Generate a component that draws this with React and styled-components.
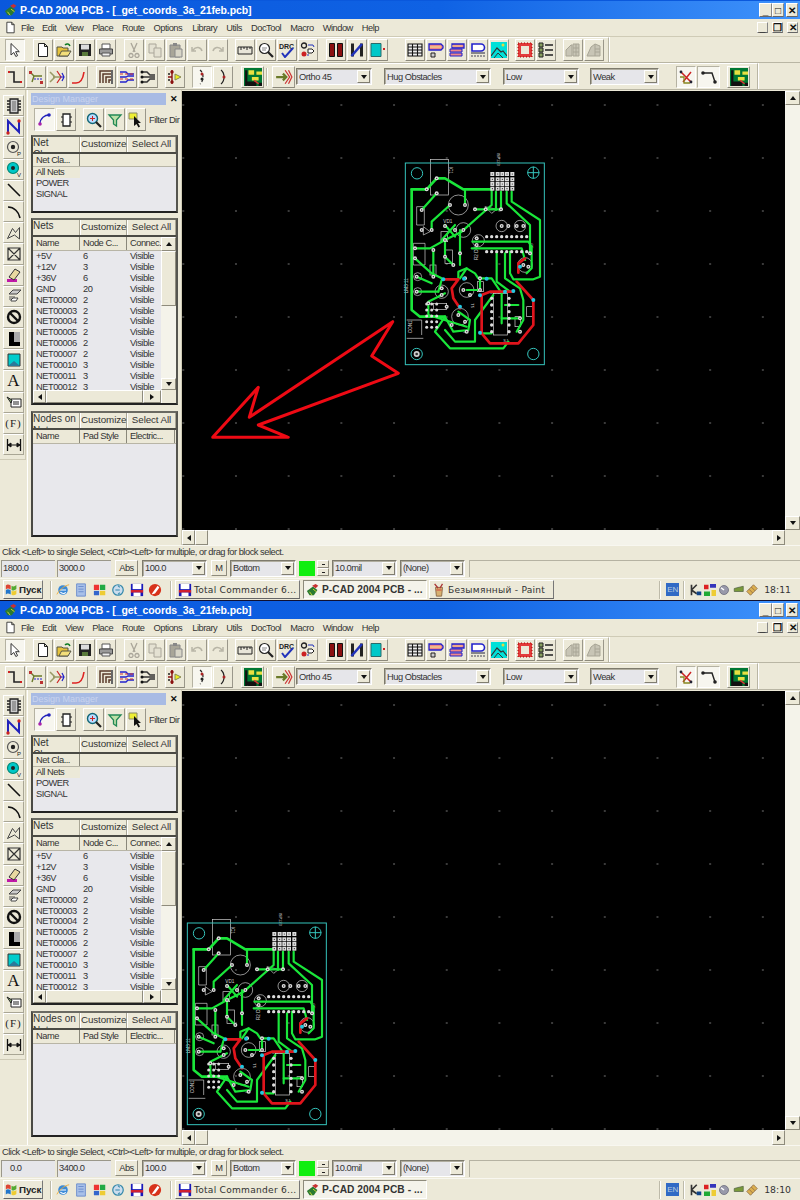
import React from 'react';
import styled, { createGlobalStyle, css } from 'styled-components';

const Global = createGlobalStyle`
  html, body { margin: 0; padding: 0; background: #ece9d8; }
  body { width: 800px; font-family: "Liberation Sans", Arial, sans-serif; font-size: 9.3px; color: #222; }
`;
const uiText = css` font: 400 9.3px "Liberation Sans", Arial, sans-serif; letter-spacing: -.48px; color: #333; `;

/* ---------- icons ---------- */
const Svg = styled.svg` display: block; flex: none; `;
const S = ({ children, size = 16 }) => <Svg width={size} height={size} viewBox="0 0 16 16">{children}</Svg>;
const I = {
  select: <path d="M4 1.5V13l2.8-2.5 2 4 1.8-.9-2-3.9h3.7z" fill="#fff" stroke="#333" />,
  doc: <path d="M3.5 1.5h6l3 3v10h-9zM9.5 1.5v3h3" fill="#fff" stroke="#222" />,
  open: <><path d="M1 5h5l1 1h5v8H1z" fill="#e6c33c" stroke="#554" /><path d="M3 14l2.5-5H15l-3 5z" fill="#f3df7a" stroke="#554" /><path d="M9 3c2-2 4-1 5 1" fill="none" stroke="#0a7a20" strokeWidth="1.5" /></>,
  save: <><path d="M2 2h12v12H2z" fill="#222" /><path d="M4 2.500h8v5H4z" fill="#ddd" /><path d="M5 10h6v4H5z" fill="#5a7a3a" /></>,
  print: <><path d="M4 2h8v5H4z" fill="#fff" stroke="#555" /><path d="M1.500 7h13v5h-13z" fill="#999" stroke="#444" /><path d="M4 11h8v3H4z" fill="#eee" stroke="#555" /></>,
  cut: <path d="M5 1l4 9M11 1L7 10M5 11.500a2 2 0 1 0 .01 0M11 11.500a2 2 0 1 0 .01 0" fill="none" stroke="#aaa69a" strokeWidth="1.3" />,
  copy: <><path d="M2 2h7v9H2z" fill="#e4e1d2" stroke="#aaa69a" /><path d="M7 6h7v9H7z" fill="#e4e1d2" stroke="#aaa69a" /></>,
  paste: <><path d="M2 3h10v12H2z" fill="#a8a598" stroke="#888" /><path d="M7 7h7v8H7z" fill="#d8d5c7" stroke="#888" /><path d="M5 1h4v3H5z" fill="#888" /></>,
  undo: <path d="M4 8c3-4 8-3 9 1M3 5v4h4" fill="none" stroke="#b8b5a6" strokeWidth="1.5" />,
  redo: <path d="M12 8C9 4 4 5 3 9M13 5v4H9" fill="none" stroke="#b8b5a6" strokeWidth="1.5" />,
  ruler: <><path d="M1 5h14v7H1z" fill="#e8e5d8" stroke="#222" /><path d="M4 5v3M7 5v2M10 5v3M13 5v2" stroke="#222" /></>,
  zoomdoc: <><circle cx="6.500" cy="6.500" r="5" fill="#fff" stroke="#222" strokeWidth="1.2" /><path d="M10 10l5 5" stroke="#222" strokeWidth="2.2" /><path d="M4 6h5M4 8h4" stroke="#888" /></>,
  drc: <><text x="0" y="7" fontSize="7" fontWeight="700" fontFamily="Liberation Sans" fill="#222">DRC</text><path d="M3 11l3 4 8-9" fill="none" stroke="#2233bb" strokeWidth="2" /></>,
  conn: <><circle cx="4" cy="3.500" r="2.500" fill="none" stroke="#222" strokeWidth="1.3" /><circle cx="4" cy="12" r="2.500" fill="#c22" /><path d="M8 3h5l1 2M7 13h2" stroke="#2233bb" fill="none" /><path d="M8 7h4l2 2-2 2H8z" fill="#fff" stroke="#222" /></>,
  pads: <><path d="M1.500 1.500h5v13h-5z" fill="#8a1010" stroke="#111" /><path d="M9.500 1.500h5v13h-5z" fill="#8a1010" stroke="#111" /></>,
  net: <><path d="M2 1.500h3v13H2zM11 1.500h3v13h-3z" fill="#222" /><path d="M2.500 14L13 2" stroke="#2233bb" strokeWidth="2.6" /></>,
  door: <><path d="M1 1.500h10v13H1z" fill="#00c8c8" stroke="#2a6a6a" /><path d="M13 6h2v2h-2z" fill="#c22" /></>,
  grid: <path d="M1 2h14v12H1zM1 5h14M1 8h14M1 11h14M5.500 2v12M10.500 2v12" fill="#eee" stroke="#111" strokeWidth="1.1" />,
  layerP: <><path d="M1 2h12l2 2v2l-2 2H1z" fill="#e88" stroke="#22c" strokeWidth="1.3" /><path d="M3 11h4v4H3z" fill="#ccc" stroke="#222" /><path d="M2 5h11" stroke="#ec8" strokeWidth="1.5" /></>,
  layerS: <><path d="M3 2h12v4H3z" fill="#e88" stroke="#22c" strokeWidth="1.3" /><path d="M1 7h12v3H1zM1 11h12v3H1z" fill="#e88" stroke="#22c" /><path d="M3 4h10" stroke="#ec8" /></>,
  layerD: <><path d="M2 2h9a3 3 0 0 1 0 7H2z" fill="#fff" stroke="#22c" strokeWidth="1.6" /><path d="M1 11h14" stroke="#445" strokeWidth="1.2" /><path d="M1 14h14" stroke="#445" strokeWidth="1.2" strokeDasharray="2 1" /></>,
  mountain: <><path d="M0 0h16v16H0z" fill="#00e0d8" /><path d="M0 14l6-8 4 4 2-1 4 5" fill="none" stroke="#333" strokeWidth="1.2" /><path d="M3 16l4-5 3 3 2 2" fill="none" stroke="#333" /><circle cx="12" cy="3" r="1.500" fill="#dd4" /></>,
  redbox: <><path d="M1 1h14v14H1z" fill="#e23a3a" /><path d="M4 4h8v8H4z" fill="#ece9d8" /><path d="M1 1h14v14H1z" fill="none" stroke="#a00" strokeDasharray="1 2" /></>,
  list: <><path d="M1 1h4v4H1zM1 6h4v4H1zM1 11h4v4H1z" fill="#8aa060" stroke="#222" /><path d="M7 3h8M7 8h8M7 13h8" stroke="#222" strokeWidth="1.3" /></>,
  dim1: <path d="M1 14V8l5-5h1v11zM8 2h6v12H8zM8 6h6M8 10h6M11 2v12" fill="#c8c5b6" stroke="#a8a596" />,
  dim2: <path d="M1 14l4-9 4-3 5 2v10H1zM9 2v12M9 7h5M9 10h5" fill="#c8c5b6" stroke="#a8a596" />,
  rManualEnds: <><path d="M2 3h5v10h7" fill="none" stroke="#222" strokeWidth="1.6" /><path d="M1 2h2v2H1zM13 12h2v2h-2z" fill="#c22" /></>,
  rTree: <><path d="M2 3l4 4h8M6 7l-2 6" fill="none" stroke="#6a7a2a" strokeWidth="1.4" /><path d="M6 10h9" stroke="#22c" strokeWidth="1.2" strokeDasharray="2 1" /><path d="M1 2h3v3H1zM12 12h3v3h-3z" fill="#b33" /></>,
  rMulti: <><path d="M1 3l5 5-5 5M4 8h7" fill="none" stroke="#996" strokeWidth="1.5" /><path d="M8 2l4 6-4 6" fill="none" stroke="#c22" strokeWidth="1.2" /><path d="M11 8h4M13 4l2 4-2 4" fill="none" stroke="#22c" strokeWidth="1.2" /></>,
  rArrow: <><path d="M1 8h9M7 5l3 3-3 3" fill="none" stroke="#6a7a2a" strokeWidth="2" /><path d="M9 2l4 6-4 6M12 2l3 6-3 6" fill="none" stroke="#c33" strokeWidth="1.1" /></>,
  rCurve: <path d="M2 14h4c4 0 7-4 8-11" fill="none" stroke="#d22" strokeWidth="1.6" />,
  rBus: <><path d="M2 14V2h12M5 14V5h9M8 14V8h6M11 14v-3h3" fill="none" stroke="#5a3a2a" strokeWidth="1.5" /><path d="M13 1h2v14h-2z" fill="#666" /></>,
  rWave: <><path d="M1 3h6l2 2h6M1 8h6l2-1h6M1 13h6l2-2h6" fill="none" stroke="#22c" strokeWidth="1.3" /><path d="M1 5h13M1 10h13" stroke="#c33" strokeDasharray="3 2" /></>,
  rFan: <><path d="M2 3h5l3 3h5M2 8h13M2 13h5l3-3h5" fill="none" stroke="#333" strokeWidth="1.5" /><circle cx="2" cy="3" r="1.500" fill="#111" /><circle cx="2" cy="8" r="1.500" fill="#111" /><circle cx="2" cy="13" r="1.500" fill="#111" /></>,
  rYellow: <><path d="M5 1v14M1 8h4" stroke="#8a1010" strokeWidth="1.4" /><circle cx="5" cy="3" r="1.700" fill="#8a1010" /><circle cx="5" cy="13" r="1.700" fill="#8a1010" /><path d="M8 5l6 3-6 3z" fill="#ee2" stroke="#885" /><circle cx="2" cy="5" r="1" fill="#222" /><circle cx="2" cy="11" r="1" fill="#222" /></>,
  arcA: <><path d="M6 1c4 3 4 11 0 14" fill="none" stroke="#222" strokeWidth="1.2" strokeDasharray="3 2" /><circle cx="8" cy="5" r="1.500" fill="#a22" /><circle cx="8" cy="10" r="1.500" fill="#222" /></>,
  arcB: <><path d="M6 1c4 3 4 11 0 14" fill="none" stroke="#222" strokeWidth="1.2" /><circle cx="9" cy="8" r="1.500" fill="#a22" /></>,
  pcb: <><path d="M0 0h18v18H0z" fill="#073" /><path d="M4 2h5v4H4zM11 3h5v3h-5zM7 8h6v3H7z" fill="#e8e040" /><path d="M1 2h2v14H1zM3 12h8v4H3zM13 13h3v3h-3z" fill="#111" /><path d="M9 11l4 3" stroke="#d33" strokeWidth="1.3" /></>,
  noVia: <><path d="M3 3l10 10M13 3L9 8l-4 5" fill="none" stroke="#c22" strokeWidth="1.5" /><path d="M2 8h4v6h6" fill="none" stroke="#882" strokeWidth="1.3" /><circle cx="13" cy="13" r="1.400" fill="#223" /><circle cx="3" cy="3" r="1.400" fill="#223" /></>,
  segment: <><path d="M2 4h9l3 9" fill="none" stroke="#222" strokeWidth="1.4" /><circle cx="2" cy="4" r="1.800" fill="#222" /><circle cx="14" cy="13" r="1.800" fill="#222" /></>,
  chip: <><path d="M4 1h8v14H4z" fill="#ccc" stroke="#222" strokeWidth="1.3" /><path d="M1 3h3M1 6h3M1 9h3M1 12h3M12 3h3M12 6h3M12 9h3M12 12h3" stroke="#222" strokeWidth="1.3" /><path d="M6 3h4v10H6z" fill="#999" /></>,
  netN: <><path d="M2 14V2l11 11V1" fill="none" stroke="#22b" strokeWidth="2" /><circle cx="2" cy="14" r="1.700" fill="#c22" /><circle cx="13" cy="2" r="1.700" fill="#c22" /></>,
  pad: <><circle cx="7" cy="7" r="5.500" fill="none" stroke="#555" strokeWidth="1.2" /><circle cx="7" cy="7" r="2.200" fill="#222" /><text x="11" y="16" fontSize="6" fontFamily="Liberation Sans" fill="#222">P</text></>,
  via: <><circle cx="7" cy="7" r="5.500" fill="#00c8c8" stroke="#087" strokeWidth="1.2" /><circle cx="7" cy="7" r="2" fill="#222" /><text x="11" y="16" fontSize="6" fontFamily="Liberation Sans" fill="#222">V</text></>,
  line: <path d="M2 2l12 12" stroke="#111" strokeWidth="1.6" />,
  arc: <path d="M2 3c6 0 11 5 12 11" fill="none" stroke="#111" strokeWidth="1.6" />,
  poly: <path d="M1.500 13.500l5-10 3 4 4-5v11.500l-5-4z" fill="none" stroke="#444" />,
  box: <path d="M2 2h12v12H2zM2 2l12 12M14 2L2 14" fill="none" stroke="#333" strokeWidth="1.2" />,
  pencil: <><path d="M1 15h10v-3H1z" fill="#c018a8" /><path d="M3 10l6-8 5 3-6 8z" fill="#e8d8a0" stroke="#333" /></>,
  layers: <><path d="M3 6l4-4h8l-4 4z" fill="#ccc" stroke="#444" /><path d="M3 9h6M3 11h6" stroke="#555" /><path d="M5 12l2-2h5l-2 3H5z" fill="#fff" stroke="#444" /></>,
  forbid: <><circle cx="8" cy="8" r="6" fill="none" stroke="#111" strokeWidth="2.4" /><path d="M4 4l8 8" stroke="#111" strokeWidth="2.4" /></>,
  bigL: <><path d="M8 1h6v11H8z" fill="#aaa" /><path d="M3 1h5v10h6v4H3z" fill="#000" /></>,
  cyan: <><path d="M2 2h12v12H2z" fill="#00cccc" stroke="#333" /><path d="M2 14l6-5 6 5" fill="#2a7a9a" /></>,
  note: <><path d="M5 5h10v8H5z" fill="#fff" stroke="#222" /><path d="M1 3l5 3-1 3z" fill="#8a7" stroke="#222" /><path d="M7 8h6M7 10h6" stroke="#222" /></>,
  dim: <><path d="M1.500 2v12M14.500 2v12" stroke="#111" strokeWidth="1.3" /><path d="M2 8h12M2 8l3-2v4zM14 8l-3-2v4z" fill="#111" stroke="#111" /></>,
  chain: <><path d="M3 12c0-6 5-9 9-9" fill="none" stroke="#22b" strokeWidth="1.3" /><circle cx="3" cy="12" r="1.800" fill="#a2a" /><circle cx="12" cy="3" r="1.800" fill="#22b" /></>,
  comp: <><path d="M5 2h7v12H5z" fill="#fff" stroke="#222" strokeWidth="1.3" /><path d="M3 5h2M3 10h2M12 5h2M12 10h2" stroke="#222" /></>,
  zoom: <><circle cx="6.500" cy="6.500" r="5" fill="#bdf" stroke="#167" strokeWidth="1.4" /><path d="M4 6.500h5M6.500 4v5" stroke="#c22" /><path d="M10 10l5 5" stroke="#222" strokeWidth="2.2" /></>,
  funnel: <path d="M2 3h12L9.500 8v6l-3-2V8z" fill="#bde0a8" stroke="#285" strokeWidth="1.3" />,
  cursor: <><path d="M1 1h8v6H1z" fill="#ee3" stroke="#886" /><path d="M6 4v10l2.500-2 2 3.500 1.500-1-2-3.500h3z" fill="#111" /></>,
  flag: <><path d="M1 3c2-2 4-1 6 0v5c-2-1-4-2-6 0z" fill="#d43" /><path d="M8 3.500c2 1 4 1 6-1v5c-2 2-4 2-6 1z" fill="#5a3" /><path d="M1 9c2-2 4-1 6 0v5c-2-1-4-2-6 0z" fill="#27c" /><path d="M8 9.500c2 1 4 1 6-1v5c-2 2-4 2-6 1z" fill="#ec3" /></>,
  ie: <><circle cx="8" cy="8" r="5.500" fill="#3a8ad8" /><path d="M4.500 8h7M5 10.500c2 2 5 2 6 0" stroke="#fff" fill="none" strokeWidth="1.3" /><path d="M1 13C3 9 9 3 15 2" stroke="#ea3" fill="none" /></>,
  notepad: <><path d="M3 1h10v14H3z" fill="#a8c0e8" stroke="#68c" /><path d="M5 4h6M5 7h6M5 10h6" stroke="#68c" /></>,
  paintq: <><path d="M1 2h6v6H1z" fill="#e33" /><path d="M8 2h6v6H8z" fill="#2a4" /><path d="M1 9h6v5H1z" fill="#36c" /><path d="M8 9h6v5H8z" fill="#ec3" /></>,
  browser: <><circle cx="8" cy="8" r="6" fill="#cde" stroke="#38a" strokeWidth="1.4" /><path d="M5 8h5M10 5L8 3M10 11l-2 2" stroke="#38a" strokeWidth="1.3" /></>,
  tcmd: <><path d="M1 1h14v14H1z" fill="#1a1ab8" /><path d="M3 1h10v6H3z" fill="#fff" /><path d="M1 8h14v3H1z" fill="#d02030" /><path d="M4 11h8v4H4z" fill="#fff" /></>,
  opera: <><circle cx="8" cy="8" r="7" fill="#d8321a" /><path d="M11 3L6 10l-2 3 4-1 5-7z" fill="#fff" /></>,
  pcad: <><path d="M1 9l7-5 5 4-4 6H4z" fill="#2a7a30" /><path d="M7 3l4-2 3 2-3 3z" fill="#c83030" /><path d="M4 10l3 4M8 7l4 3" stroke="#dd3" /></>,
  paint: <><path d="M4 5h8l-1 10H5z" fill="#d8b070" stroke="#864" /><path d="M7 6L3 1M9 6l3-5" stroke="#a33" strokeWidth="1.5" /><path d="M5 8h6" stroke="#c33" /></>,
  trayK: <><path d="M2 1v14M2 8l7-7M2 8l7 5" stroke="#333" strokeWidth="2.2" fill="none" /><path d="M9 10h6v5H9z" fill="#148" /></>,
  trayC: <><path d="M0 1h6v6H0z" fill="#d22" /><path d="M8 0h8v5H8z" fill="#33b" /><path d="M0 10h8v6H0z" fill="#2a3" /><path d="M10 8h6v8h-6z" fill="#ec3" /></>,
  trayD: <><circle cx="8" cy="8" r="6" fill="#99a" stroke="#667" /><path d="M8 8L4 5" stroke="#fff" strokeWidth="2" /></>,
  trayN: <><path d="M1 8l9-6v6z" fill="#ddd" /><path d="M3 10h12V3L3 6z" fill="#7a9a3a" stroke="#564" /></>,
  trayS: <><path d="M1 10L10 1l5 5-9 9z" fill="#dcb050" stroke="#864" /><path d="M4 7l5 5M7 4l5 5" stroke="#864" /></>,
};
const Ic = ({ n, size }) => <S size={size}>{I[n]}</S>;

/* ---------- chrome ---------- */
const Win = styled.div`
  width: 800px; height: 600px; display: flex; flex-direction: column;
  background: #ece9d8; overflow: hidden;
`;
const TitleBar = styled.div`
  height: 19px; flex: none; display: flex; align-items: center; padding: 0 2px 0 4px;
  background: linear-gradient(90deg, #0a58dc 0%, #0f62e4 55%, #3f93fb 100%);
  border-top: 1px solid ${p => p.$dark ? '#101030' : '#0a58dc'}; box-sizing: border-box; color: #fff;
  font: 700 10.5px "Liberation Sans", sans-serif;
`;
const TitleText = styled.span` margin-left: 2px; letter-spacing: -.1px; flex: 1; `;
const TitleCtl = styled.div`
  width: ${p => p.$w || 12}px; height: 14px; margin-left: ${p => p.$ml || 0}px; background: #ece9d8; display: flex; align-items: center; justify-content: center;
  font: 700 10px "Liberation Sans", sans-serif; color: #111; box-sizing: border-box;
  border: 1px solid; border-color: #fff #888 #666 #fff;
`;
const MenuBar = styled.div`
  height: 18px; flex: none; display: flex; align-items: center; padding: 0 2px 0 4px; box-sizing: border-box;
  border-bottom: 1px solid #cfcbb6;
`;
const MenuIcon = styled.div` width: 14px; margin-right: 3px; `;
const MenuItem = styled.span` ${uiText} margin-right: ${p => p.$mr}px; `;
const Spacer = styled.div` flex: 1; `;
const MdiBtn = styled(TitleCtl)` width: 11px; height: 11px; margin-left: ${p => p.$ml || 0}px; `;

const ToolRow = styled.div`
  height: ${p => p.$h}px; flex: none; display: flex; box-sizing: border-box; border-bottom: 1px solid #b9b6a4;
`;
const Band = styled.div`
  width: ${p => p.$w}px; display: flex; align-items: center; padding-left: ${p => p.$pl || 5}px; box-sizing: border-box;
  border-right: 1px solid #b9b6a4; border-top: 1px solid #fff; box-shadow: 1px 0 0 #fff;
`;
const Btn = styled.div`
  width: ${p => p.$w || 20}px; height: ${p => p.$h || 22}px; flex: none; display: flex; align-items: center; justify-content: center;
  margin-left: ${p => p.$ml || 0}px; margin-right: 1px; box-sizing: border-box;
  border: 1px solid; border-color: ${p => p.$on ? '#b5b2a2 #fff #fff #b5b2a2' : '#fff #9a978a #8c897b #fff'};
  background: ${p => p.$on ? '#f7f6ef' : '#ece9d8'};
`;
const Combo = styled.div`
  ${uiText}
  width: ${p => p.$w}px; height: ${p => p.$h || 17}px; margin-left: ${p => p.$ml || 0}px; flex: none; box-sizing: border-box; display: flex; align-items: center;
  background: #e6e6ea; border: 1px solid; border-color: #7d7a6c #fff #fff #7d7a6c; box-shadow: inset 1px 1px 0 #b0ad9f;
  padding-left: 2px;
`;
const ComboText = styled.span` flex: 1; white-space: nowrap; overflow: hidden; `;
const DropBtn = styled.div`
  width: 13px; height: calc(100% - 2px); margin-right: 1px; flex: none; background: #ece9d8; display: flex; align-items: center; justify-content: center;
  border: 1px solid; border-color: #fff #807d70 #807d70 #fff; box-sizing: border-box;
`;
const Tri = styled.i`
  width: 0; height: 0; display: block;
  ${p => p.$d === 'd' && 'border-left:3.5px solid transparent;border-right:3.5px solid transparent;border-top:4px solid #111;'}
  ${p => p.$d === 'u' && 'border-left:3.5px solid transparent;border-right:3.5px solid transparent;border-bottom:4px solid #111;'}
  ${p => p.$d === 'l' && 'border-top:3.5px solid transparent;border-bottom:3.5px solid transparent;border-right:4px solid #111;'}
  ${p => p.$d === 'r' && 'border-top:3.5px solid transparent;border-bottom:3.5px solid transparent;border-left:4px solid #111;'}
`;

/* ---------- main area ---------- */
const Main = styled.div` height: 455px; flex: none; display: flex; `;
const SideBar = styled.div`
  width: 26px; height: 370px; flex: none; padding: 5px 0 0 3px; box-sizing: border-box; display: flex; flex-direction: column;
  border-right: 1px solid #cfcbb6; border-bottom: 1px solid #cfcbb6;
`;
const SideBtn = styled.div`
  width: 21px; height: 21.2px; flex: none; display: flex; align-items: center; justify-content: center; box-sizing: border-box;
  border-bottom: 1px solid #a9a695; border-right: 1px solid #a9a695; border-top: 1px solid #fff; border-left: 1px solid #fff;
  font: 400 11px "Liberation Serif", serif; color: #222; letter-spacing: 1px;
`;
const BigA = styled.span` font: 400 17px "Liberation Serif", serif; letter-spacing: 0; color: #111; `;
const Manager = styled.div`
  width: 155px; flex: none; margin-left: 1px; padding: 2px 2px 0 3px; box-sizing: border-box; display: flex; flex-direction: column;
  border-left: 1px solid #fff; border-right: 1px solid #cfcbb6;
`;
const MgrHead = styled.div` height: 13px; flex: none; display: flex; align-items: center; `;
const MgrTitle = styled.div`
  width: 135px; height: 12px; background: #a8bbe4; color: #c9d4ee; font-size: 9px; padding-left: 1px; line-height: 12px; box-sizing: border-box;
`;
const MgrClose = styled.span` margin-left: 4px; font: 700 9px "Liberation Sans", sans-serif; color: #111; `;
const MgrTools = styled.div` height: 25px; flex: none; margin-top: 2px; display: flex; align-items: center; padding-left: 3px; `;
const FilterLabel = styled.span` ${uiText} margin-left: 2px; white-space: nowrap; `;
const Panel = styled.div`
  flex: none; width: 147px; height: ${p => p.$h}px; margin-top: ${p => p.$mt}px; box-sizing: border-box; display: flex; flex-direction: column;
  border: 2px solid; border-color: #6a6a62 #55554f #222 #4a4a44; background: #e8e8ec; overflow: hidden;
`;
const PanelBar = styled.div`
  height: 15px; flex: none; display: flex; background: #ece9d8; border-bottom: 2px solid #4a4a44;
`;
const PanelTitle = styled.div`
  width: 47px; flex: none; font-size: 10px; line-height: 12px; color: #333; overflow: hidden; box-sizing: border-box;
  border-right: 1px solid #a9a695;
`;
const PanelCmd = styled.div`
  flex: none; width: ${p => p.$w}px; box-sizing: border-box; text-align: center; font-size: 9.8px; letter-spacing: -.1px; line-height: 14px; color: #333; white-space: nowrap; border-right: 1px solid #a9a695;
  border-left: 1px solid #fff;
`;
const HeadRow = styled.div`
  height: ${p => p.$h || 14}px; flex: none; display: flex; background: #ece9d8; border-bottom: 1px solid #b8b5a6; box-sizing: border-box;
`;
const HeadCell = styled.div`
  ${uiText}
  width: ${p => p.$w}px; flex: none; box-sizing: border-box; padding-left: 3px; line-height: 12px;
  border-right: 1px solid #8a887a; white-space: nowrap; overflow: hidden;
`;
const TableBody = styled.div` flex: 1; display: flex; min-height: 0; `;
const Rows = styled.div` flex: 1; min-width: 0; padding-top: ${p => p.$pt || 0}px; `;
const Row = styled.div` ${uiText} height: 10.92px; display: flex; line-height: 11px; `;
const Cell = styled.div`
  width: ${p => p.$w}px; flex: none; box-sizing: border-box; padding-left: 3px; white-space: nowrap;
  background: ${p => p.$hl ? '#ece9d8' : 'transparent'};
`;
const VScroll = styled.div`
  width: ${p => p.$w}px; flex: none; display: flex; flex-direction: column; background: #f4f3ea;
`;
const ScrollBtn = styled.div`
  flex: none; width: ${p => p.$w || '100%'}; height: ${p => p.$h || '100%'}; display: flex; align-items: center; justify-content: center; background: #ece9d8; box-sizing: border-box;
  border: 1px solid; border-color: #fff #8e8b7c #8e8b7c #fff;
`;
const Thumb = styled.div`
  flex: ${p => p.$grow ? 1 : 'none'}; ${p => p.$h ? `height:${p.$h}px;` : ''} ${p => p.$w ? `width:${p.$w}px;` : ''}
  background: #ece9d8; box-sizing: border-box; border: 1px solid; border-color: #fff #8e8b7c #8e8b7c #fff;
`;
const Fill = styled.div` flex: 1; `;
const HScroll = styled.div` height: 13px; flex: none; display: flex; background: #f4f3ea; `;
const Corner = styled.div` width: 15px; flex: none; background: #ece9d8; border-left: 1px solid #fff; box-sizing: border-box; `;

const Work = styled.div` flex: 1; min-width: 0; padding-top: 1px; display: grid; grid-template-columns: 603px 15px; grid-template-rows: 439px 15px; `;
const Canvas = styled.div`
  position: relative; overflow: hidden; background-color: #000;
  background-image: radial-gradient(circle at 1px 1px, #3a3a3a 0.8px, transparent 1.1px);
  background-size: 52.7px 53px; background-position: .3px 13px;
`;
const Board = styled.svg` position: absolute; display: block; left: ${p => p.$left}px; top: ${p => p.$top}px; `;
const ArrowMark = styled.svg` position: absolute; left: 18px; top: 219px; display: block; `;
const HBar = styled.div` display: flex; background: #f4f3ea; grid-column: 1; `;
const Bottom = styled.div` grid-column: 2; background: #ece9d8; `;

const StatusLine = styled.div`
  ${uiText}
  height: 13px; flex: none; box-sizing: border-box; padding: 0 2px; line-height: 12px;
  border-top: 1px solid #f8f7f0; white-space: nowrap;
`;
const CoordBar = styled.div` height: 20px; flex: none; display: flex; align-items: center; padding-left: 1px; `;
const Field = styled.div`
  ${uiText}
  width: ${p => p.$w}px; height: 17px; margin-left: ${p => p.$ml || 0}px; flex: none; box-sizing: border-box; padding-left: ${p => p.$pl || 1}px;
  background: #e6e6ea; border-top: 1px solid #9a978a; border-left: 1px solid #9a978a; line-height: 15px;
`;
const SmallBtn = styled.div`
  ${uiText}
  width: ${p => p.$w}px; height: 16px; margin-left: ${p => p.$ml || 0}px; flex: none; text-align: center; box-sizing: border-box; line-height: 14px;
  border: 1px solid; border-color: #fff #8e8b7c #8e8b7c #fff;
`;
const Swatch = styled.div` width: 16px; height: 15px; margin-left: 3px; background: #10ee10; flex: none; `;
const Spinner = styled.div` width: 12px; height: 16px; margin-left: 2px; display: flex; flex-direction: column; flex: none; `;
const SpinPart = styled.div`
  flex: 1; display: flex; align-items: center; justify-content: center; box-sizing: border-box; border: 1px solid; border-color: #fff #8e8b7c #8e8b7c #fff;
`;
const Tiny = styled.i` display: block; width: 3px; height: 1px; background: #222; `;
const Blank = styled.div`
  flex: 1; height: 17px; margin-left: 4px; border-top: 1px solid #b5b2a2; border-left: 1px solid #b5b2a2; box-sizing: border-box;
`;

const TaskBar = styled.div`
  height: 22px; flex: none; display: flex; align-items: center; padding: 0 9px 0 3px; box-sizing: border-box; border-top: 1px solid #f8f7f0;
`;
const StartBtn = styled.div`
  width: 40px; height: 19px; flex: none; display: flex; align-items: center; gap: 1px; box-sizing: border-box; padding-left: 1px;
  font: 700 9.8px "Liberation Sans", sans-serif; color: #222; letter-spacing: -.1px;
  border: 1px solid; border-color: #fff #777 #666 #fff;
`;
const Sep = styled.div` width: 1px; height: 18px; margin-left: ${p => p.$ml}px; background: #bdbaa9; box-shadow: 1px 0 0 #fff; flex: none; `;
const Quick = styled.div` display: flex; gap: 4.4px; margin-left: 5px; flex: none; `;
const TaskBtn = styled.div`
  width: ${p => p.$w}px; height: 19px; margin-left: ${p => p.$ml || 0}px; flex: none; display: flex; align-items: center; gap: 2px; padding-left: 2px; box-sizing: border-box; overflow: hidden;
  font: ${p => p.$on ? '700 10.2px "Liberation Sans"' : '400 9.1px "DejaVu Sans"'}, sans-serif; color: #333; white-space: nowrap; letter-spacing: ${p => p.$on ? '.05px' : '.25px'};
  border: 1px solid; border-color: ${p => p.$on ? '#8e8b7c #fff #fff #8e8b7c' : '#fff #777 #666 #fff'}; background: ${p => p.$on ? '#f4f3ea' : '#ece9d8'};
`;
const Lang = styled.div`
  width: 13px; height: 13px; flex: none; margin-left: 6px; background: #316ac5; color: #bcd; font: 400 8px "Liberation Sans", sans-serif; line-height: 13px; text-align: center;
`;
const Tray = styled.div` display: flex; align-items: center; gap: 2px; margin-left: 6px; flex: none; `;
const Clock = styled.span` margin-left: 4px; font: 400 9.3px "DejaVu Sans", sans-serif; color: #333; `;

/* ---------- data ---------- */
const tb1 = [['select', 0, 1, 20], ['doc', 7], ['open', 0], ['save', 0], ['print', 0], ['cut', 7], ['copy', 0], ['paste', 0], ['undo', 0], ['redo', 0],
  ['ruler', 6], ['zoomdoc', 0], ['drc', 0], ['conn', 0], ['pads', 7], ['net', 0], ['door', 0], ['grid', 16], ['layerP', 0], ['layerS', 0], ['layerD', 0], ['mountain', 0], ['redbox', 5], ['list', 0], ['dim1', 6], ['dim2', 0]];
const tb2 = [['rManualEnds', 0], ['rTree', 0], ['rMulti', 0], ['rCurve', 0], ['rBus', 7], ['rWave', 0], ['rFan', 0], ['rYellow', 6], ['arcA', 6, 1], ['arcB', 0], ['pcb', 7, 2]];
const side = ['chip', 'netN', 'pad', 'via', 'line', 'arc', 'poly', 'box', 'pencil', 'layers', 'forbid', 'bigL', 'cyan', null, 'note', 'F', 'dim'];
const menus = [['File', 8], ['Edit', 9], ['View', 9], ['Place', 9], ['Route', 9], ['Options', 10], ['Library', 9], ['Utils', 9], ['DocTool', 9], ['Macro', 9], ['Window', 9], ['Help', 0]];
const nets = [['+5V', 6], ['+12V', 3], ['+36V', 6], ['GND', 20], ['NET00000', 2], ['NET00003', 2], ['NET00004', 2], ['NET00005', 2], ['NET00006', 2], ['NET00007', 2], ['NET00010', 3], ['NET00011', 3], ['NET00012', 3]];

/* ---------- PCB ---------- */
const green = [
  'M50 118H95L125 85H150L205 118H290', 'M50 118V480L75 500H150', 'M125 130L80 180', 'M210 120V165', 'M165 165L110 215V240',
  'M290 118V165L200 245L150 270L105 295H60', 'M240 178H320', 'M318 125V178', 'M303 125V180', 'M335 125V160L405 225V310',
  'M350 125V155L435 210V380L415 388H355L345 370V305', 'M232 275H400L410 290V355L395 370', 'M230 295H380L390 330', 'M195 240V345', 'M150 270V320L175 345',
  'M60 325L110 370L140 385', 'M115 300V380', 'M190 385V365L215 355L240 370L250 385H290L320 430V520', 'M215 420H255V385', 'M330 310V385L375 415L385 450V510L365 545',
  'M305 310V395L345 425', 'M150 500L120 545L165 595H325L340 575', 'M100 495L215 530', 'M150 540L180 575H240V510L295 435', 'M190 485L225 510L220 540L175 545L150 500',
  'M330 465H370', 'M320 505H370', 'M290 550H255', 'M215 355L195 385', 'M150 430L100 455V495', 'M65 380L110 400', 'M65 425H130', 'M140 390L130 425', 'M150 225L180 260', 'M180 225L140 270',
];
const red = ['M145 388H190L170 415L175 445L195 475', 'M260 435V550L285 580H370L415 525V450L365 395', 'M260 435L285 425H355', 'M370 368V340L390 325'];
const pads = [[125, 85], [95, 118], [125, 130], [210, 165], [165, 165], [80, 180], [80, 240], [110, 240], [240, 178], [272, 178], [318, 178], [150, 228], [180, 240], [205, 240], [150, 270], [60, 295], [60, 325], [115, 300], [115, 380], [195, 310], [150, 320], [175, 345], [65, 380], [65, 425], [140, 415], [140, 435], [210, 385], [205, 420], [225, 435], [255, 385], [255, 420], [190, 495], [210, 515], [170, 525], [215, 545], [100, 460], [155, 470], [375, 505], [375, 545], [405, 310], [385, 345], [400, 350], [320, 228], [340, 228], [365, 228], [385, 228], [245, 265], [245, 285]];
const cols = [292, 308, 322, 336, 352];
const ics = [275, 290, 305, 320, 335, 350, 365, 380, 395];
const vert = [445, 465, 485, 505, 525, 545];
const vias = [[145, 388], [207, 386], [255, 436], [275, 386], [355, 423], [415, 450], [375, 350], [255, 548], [195, 470], [330, 425]];

const Pcb = ({ left, top }) => (
  <Board width="170" height="225" viewBox="0 0 510 675" $left={left} $top={top}>
    <g fill="none" stroke="#d8d8d8" strokeWidth="2">
      <rect x="106" y="28" width="54" height="107" />
      <circle cx="190" cy="165" r="30" />
      <path d="M65 170H88V225H65zM55 280H90V345H55zM80 555V510H35M35 565H85" />
      <rect x="105" y="345" width="18" height="30" />
      <rect x="138" y="245" width="20" height="30" />
      <rect x="150" y="300" width="22" height="40" />
      <circle cx="205" cy="240" r="22" /><circle cx="250" cy="272" r="18" />
      <circle cx="320" cy="228" r="17" /><circle cx="375" cy="228" r="17" /><circle cx="390" cy="345" r="22" />
      <circle cx="68" cy="380" r="12" /><circle cx="68" cy="425" r="12" /><circle cx="140" cy="425" r="20" />
      <circle cx="215" cy="420" r="22" /><circle cx="195" cy="500" r="25" />
      <rect x="115" y="460" width="40" height="18" />
      <rect x="295" y="430" width="42" height="125" />
      <rect x="247" y="395" width="18" height="30" />
      <rect x="395" y="470" width="18" height="30" />
      <rect x="360" y="500" width="16" height="30" />
      <path d="M270 170L305 178L290 190Z" />
      <path d="M85 230L105 245L85 255Z" />
    </g>
    <g fill="#d0d0d0" fontFamily="Liberation Sans" fontSize="14">
      <text x="163" y="50" transform="rotate(90 163 50)">IC1</text>
      <text x="145" y="218">VD1</text>
      <text x="40" y="430" transform="rotate(-90 40 430)">LM3 11</text>
      <text x="250" y="330" transform="rotate(-90 250 330)">R2 DIP</text>
      <text x="50" y="550" transform="rotate(-90 50 550)">CON1</text>
      <text x="285" y="432" fontSize="12">U2PIC</text>
      <text x="305" y="8" transform="rotate(90 305 8)" fontSize="12">ISP123</text>
      <text x="325" y="577" fontSize="12">SJ</text>
      <text x="405" y="280" transform="rotate(90 405 280)" fontSize="12">C5</text>
      <text x="228" y="460" transform="rotate(90 228 460)" fontSize="12">T5</text>
      <text x="205" y="548" fontSize="12">J2</text>
    </g>
    <g fill="none" strokeLinecap="round" strokeLinejoin="round">
      {green.map((d, i) => <path key={i} d={d} stroke="#1ae63a" strokeWidth={i < 2 ? 8 : 6.5} />)}
      {red.map((d, i) => <path key={i} d={d} stroke="#e0141c" strokeWidth="8" />)}
    </g>
    <g fill="#dcdcdc">
      {cols.flatMap(x => [72, 88, 102, 116].map(y => <rect key={`${x}-${y}`} x={x - 6} y={y - 6} width="12" height="12" />))}
      {ics.flatMap(x => [260, 305].map(y => <circle key={`${x}-${y}`} cx={x} cy={y} r="5" />))}
      {vert.flatMap(y => [290, 342].map(x => <circle key={`${x}-${y}`} cx={x} cy={y} r="5" />))}
      {[95, 110, 125].flatMap(x => [462, 480, 498, 515, 532].map(y => <circle key={`${x}-${y}`} cx={x} cy={y} r="4.5" />))}
      {pads.map(([x, y], i) => <circle key={i} cx={x} cy={y} r="6" />)}
    </g>
    <g fill="#222">
      {pads.map(([x, y], i) => <circle key={i} cx={x} cy={y} r="2" />)}
      {cols.flatMap(x => [72, 88, 102, 116].map(y => <circle key={`${x}-${y}`} cx={x} cy={y} r="1.8" />))}
    </g>
    <g fill="#21c8e0">{vias.map(([x, y], i) => <circle key={i} cx={x} cy={y} r="6" />)}</g>
    <g fill="none" stroke="#35c4bc" strokeWidth="3">
      <rect x="31" y="39" width="417" height="605" />
      <circle cx="66" cy="70" r="17" /><circle cx="415" cy="68" r="17" /><circle cx="415" cy="612" r="17" /><circle cx="65" cy="612" r="17" />
      <path d="M415 50V86M397 68H433" />
    </g>
    <circle cx="65" cy="612" r="9" fill="#cfcfcf" />
    <circle cx="65" cy="612" r="4" fill="#333" />
  </Board>
);

const Arrow = () => (
  <ArrowMark width="210" height="140" viewBox="0 0 210 140">
    <path d="M192.700 11.700L171.700 46L198.300 63.300L58.300 115L88.300 127.300H12.700L58.300 77.300L49.300 107.300Z" fill="none" stroke="#ee0a14" strokeWidth="3" strokeLinejoin="round" />
  </ArrowMark>
);

const Select = ({ w, ml, h, children }) => (
  <Combo $w={w} $ml={ml} $h={h}><ComboText>{children}</ComboText><DropBtn><Tri $d="d" /></DropBtn></Combo>
);

const PanelHeader = ({ title }) => (
  <PanelBar>
    <PanelTitle>{title}</PanelTitle>
    <PanelCmd $w={47}>Customize</PanelCmd>
    <PanelCmd $w={49}>Select All</PanelCmd>
  </PanelBar>
);

const PcadWindow = ({ x, y, xPad, time, paint, arrow, dark, boardLeft, boardTop }) => (
  <Win>
    <TitleBar $dark={dark}>
      <Ic n="pcad" size={14} />
      <TitleText>P-CAD 2004 PCB - [_get_coords_3a_21feb.pcb]</TitleText>
      <TitleCtl $w={13}>_</TitleCtl><TitleCtl $w={12}>□</TitleCtl><TitleCtl $w={12} $ml={2}>✕</TitleCtl>
    </TitleBar>
    <MenuBar>
      <MenuIcon><Ic n="doc" size={13} /></MenuIcon>
      {menus.map(([m, r]) => <MenuItem key={m} $mr={r}>{m}</MenuItem>)}
      <Spacer />
      <MdiBtn>_</MdiBtn><MdiBtn $ml={4}>❐</MdiBtn><MdiBtn $ml={4}>✕</MdiBtn>
    </MenuBar>
    <ToolRow $h={26}>
      <Band $w={609}>
        {tb1.map(([n, ml, on, w]) => <Btn key={n} $ml={ml} $on={on} $w={w || 20}><Ic n={n} /></Btn>)}
      </Band>
    </ToolRow>
    <ToolRow $h={27}>
      <Band $w={758}>
        {tb2.map(([n, ml, on], i) => <Btn key={i} $ml={ml} $on={on === 1} $w={on === 2 ? 23 : 20}><Ic n={n} size={on === 2 ? 18 : 16} /></Btn>)}
        <Sep $ml={1} />
        <Btn $ml={5} $w={23}><Ic n="rArrow" size={18} /></Btn>
        <Select w={76} ml={0}>Ortho 45</Select>
        <Select w={107} ml={12}>Hug Obstacles</Select>
        <Select w={76} ml={12}>Low</Select>
        <Select w={69} ml={11}>Weak</Select>
        <Btn $ml={17} $on><Ic n="noVia" /></Btn>
        <Btn $w={23} $on><Ic n="segment" /></Btn>
        <Btn $ml={6} $w={23}><Ic n="pcb" size={18} /></Btn>
      </Band>
    </ToolRow>
    <Main>
      <SideBar>
        {side.map((n, i) => (
          <SideBtn key={i}>
            {n === null ? <BigA>A</BigA> : n === 'F' ? '(F)' : <Ic n={n} />}
          </SideBtn>
        ))}
      </SideBar>
      <Manager>
        <MgrHead><MgrTitle>Design Manager</MgrTitle><MgrClose>✕</MgrClose></MgrHead>
        <MgrTools>
          <Btn $on $h={23} $w={21}><Ic n="chain" /></Btn>
          <Btn $h={23} $w={20}><Ic n="comp" /></Btn>
          <Btn $ml={6} $h={23} $w={21}><Ic n="zoom" /></Btn>
          <Btn $h={23} $w={20}><Ic n="funnel" /></Btn>
          <Btn $h={23} $w={20}><Ic n="cursor" /></Btn>
          <FilterLabel>Filter Dir</FilterLabel>
        </MgrTools>
        <Panel $h={78} $mt={3}>
          <PanelHeader title="Net Classes" />
          <HeadRow $h={13}><HeadCell $w={47}>Net Cla...</HeadCell></HeadRow>
          <Rows>
            {[['All Nets', 1], ['POWER'], ['SIGNAL']].map(([t, hl]) => <Row key={t}><Cell $w={47} $hl={hl}>{t}</Cell></Row>)}
          </Rows>
        </Panel>
        <Panel $h={187} $mt={5}>
          <PanelHeader title="Nets" />
          <TableBody>
            <Rows>
              <HeadRow><HeadCell $w={47}>Name</HeadCell><HeadCell $w={47}>Node C...</HeadCell><HeadCell $w={36}>Connec...</HeadCell></HeadRow>
              {nets.map(([n, c]) => <Row key={n}><Cell $w={47}>{n}</Cell><Cell $w={47}>{c}</Cell><Cell $w={36}>Visible</Cell></Row>)}
            </Rows>
            <VScroll $w={15}>
              <ScrollBtn $h="14px"><Tri $d="u" /></ScrollBtn>
              <Thumb $h={55} />
              <Fill />
              <ScrollBtn $h="12px"><Tri $d="d" /></ScrollBtn>
            </VScroll>
          </TableBody>
          <HScroll>
            <ScrollBtn $w="13px"><Tri $d="l" /></ScrollBtn>
            <Thumb $grow />
            <ScrollBtn $w="18px"><Tri $d="r" /></ScrollBtn>
            <Corner />
          </HScroll>
        </Panel>
        <Panel $h={126} $mt={6}>
          <PanelHeader title="Nodes on Net" />
          <HeadRow><HeadCell $w={47}>Name</HeadCell><HeadCell $w={47}>Pad Style</HeadCell><HeadCell $w={48}>Electric...</HeadCell></HeadRow>
        </Panel>
      </Manager>
      <Work>
        <Canvas>
          {arrow && <Arrow />}
          <Pcb left={boardLeft} top={boardTop} />
        </Canvas>
        <VScroll $w={15}>
          <ScrollBtn $h="14px"><Tri $d="u" /></ScrollBtn>
          <Fill />
          <ScrollBtn $h="14px"><Tri $d="d" /></ScrollBtn>
        </VScroll>
        <HBar>
          <ScrollBtn $w="13px"><Tri $d="l" /></ScrollBtn>
          <Thumb $w={13} />
          <Fill />
          <ScrollBtn $w="13px"><Tri $d="r" /></ScrollBtn>
        </HBar>
        <Bottom />
      </Work>
    </Main>
    <StatusLine>Click &lt;Left&gt; to single Select, &lt;Ctrl&gt;&lt;Left&gt; for multiple, or drag for block select.</StatusLine>
    <CoordBar>
      <Field $w={54} $pl={xPad}>{x}</Field>
      <Field $w={54} $ml={2}>{y}</Field>
      <SmallBtn $w={23} $ml={4}>Abs</SmallBtn>
      <Select w={65} ml={4}>100.0</Select>
      <SmallBtn $w={16} $ml={4}>M</SmallBtn>
      <Select w={66} ml={3}>Bottom</Select>
      <Swatch />
      <Spinner><SpinPart><Tiny /></SpinPart><SpinPart><Tiny /></SpinPart></Spinner>
      <Select w={65} ml={3}>10.0mil</Select>
      <Select w={65} ml={3}>(None)</Select>
      <Blank />
    </CoordBar>
    <TaskBar>
      <StartBtn><Ic n="flag" size={13} />Пуск</StartBtn>
      <Sep $ml={7} />
      <Quick>
        {['ie', 'notepad', 'paintq', 'browser', 'tcmd', 'opera'].map(n => <Ic key={n} n={n} size={14} />)}
      </Quick>
      <Sep $ml={8} />
      <TaskBtn $w={125} $ml={4}><Ic n="tcmd" size={14} />Total Commander 6...</TaskBtn>
      <TaskBtn $w={124} $ml={3} $on><Ic n="pcad" size={14} />P-CAD 2004 PCB - ...</TaskBtn>
      {paint && <TaskBtn $w={125} $ml={2}><Ic n="paint" size={14} />Безымянный - Paint</TaskBtn>}
      <Spacer />
      <Sep $ml={0} />
      <Lang>EN</Lang>
      <Sep $ml={4} />
      <Tray>
        {['trayK', 'trayC', 'trayD', 'trayN', 'trayS'].map(n => <Ic key={n} n={n} size={12} />)}
        <Clock>{time}</Clock>
      </Tray>
    </TaskBar>
  </Win>
);

export default function App() {
  return (
    <>
      <Global />
      <PcadWindow x="1800.0" y="3000.0" time="18:11" paint arrow boardLeft={213} boardTop={59} />
      <PcadWindow x="0.0" xPad={8} y="3400.0" time="18:10" dark boardLeft={-4.7} boardTop={218.6} />
    </>
  );
}
